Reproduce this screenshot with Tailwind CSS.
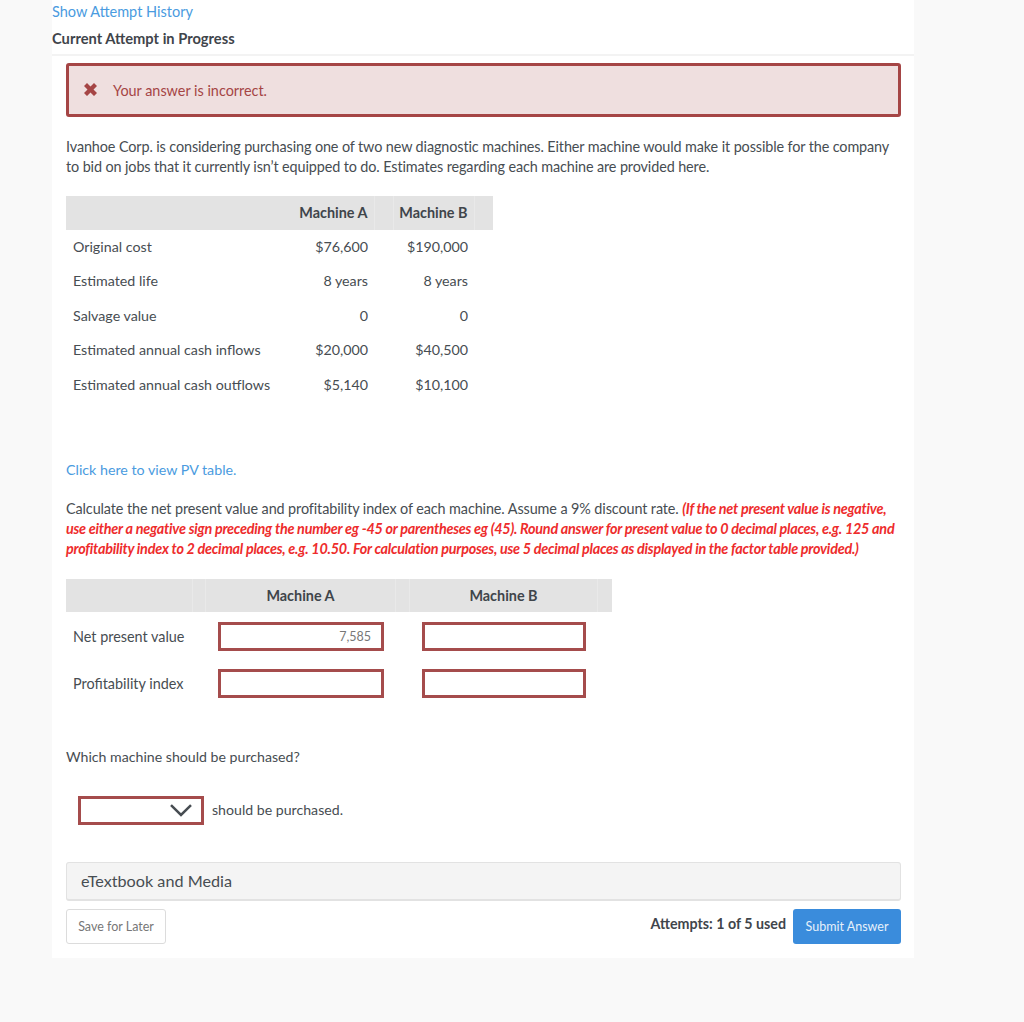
<!doctype html>
<html>
  <head>
    <meta charset="utf-8" />
    <script src="https://cdn.jsdelivr.net/npm/@tailwindcss/browser@4"></script>
  </head>
  <body class="bg-[#f9f9f9] font-['Lato',sans-serif] text-[14.25px] text-[#474d52]">
    <div class="h-[1022px] overflow-hidden">
      <div class="ml-[52px] w-[862px] h-[958px] bg-white">
        <!-- Header -->
        <div class="h-[56px] border-b-2 border-[#f3f3f3] pt-[3px]">
          <a class="block text-[14.5px] text-[#4a9be0] leading-[17px]">Show Attempt History</a>
          <h2 class="mt-[10px] text-[14.7px] font-bold leading-[17px] text-[#3f454b]">Current Attempt in Progress</h2>
        </div>

        <div class="pl-[14px] pr-[13px] pt-[7px]">
          <!-- Incorrect banner -->
          <div class="h-[54px] flex items-center border-[3px] border-[#a54545] rounded-[3px] bg-[#efdfdf] pl-[15px] text-[14.4px] text-[#a54545]">
            <svg class="w-[13px] h-[13px] mb-[2px]" viewBox="0 0 13 13" fill="currentColor">
              <path d="M0 3 3 0 6.5 3.5 10 0 13 3 9.5 6.5 13 10 10 13 6.5 9.5 3 13 0 10 3.5 6.5Z" />
            </svg>
            <span class="ml-[16px] mt-[1px]">Your answer is incorrect.</span>
          </div>

          <p class="mt-[20px] text-[14.4px] leading-[19.5px] tracking-[-0.11px]">
            Ivanhoe Corp. is considering purchasing one of two new diagnostic machines. Either machine would make it possible for the company<br />
            to bid on jobs that it currently isn’t equipped to do. Estimates regarding each machine are provided here.
          </p>

          <!-- Machine estimates -->
          <table class="mt-[19.5px] w-[427px] table-fixed border-collapse">
            <colgroup>
              <col class="w-[308px]" />
              <col class="w-[19px]" />
              <col class="w-[81px]" />
              <col class="w-[19px]" />
            </colgroup>
            <thead>
              <tr class="h-[34px] bg-[#e3e3e3] text-[14.4px] text-[#3f454b]">
                <th class="text-right pr-[6px] font-bold border-r border-[#e9e9e9]">Machine A</th>
                <th class="border-r border-[#e9e9e9]"></th>
                <th class="text-right pr-[6px] font-bold border-r border-[#e9e9e9]">Machine B</th>
                <th></th>
              </tr>
            </thead>
            <tbody>
              <tr class="h-[34.4px]">
                <td class="relative pl-[7px]">Original cost<span class="absolute right-[6px]">$76,600</span></td>
                <td></td>
                <td class="text-right pr-[6px]">$190,000</td>
                <td></td>
              </tr>
              <tr class="h-[34.4px]">
                <td class="relative pl-[7px]">Estimated life<span class="absolute right-[6px]">8 years</span></td>
                <td></td>
                <td class="text-right pr-[6px]">8 years</td>
                <td></td>
              </tr>
              <tr class="h-[34.4px]">
                <td class="relative pl-[7px]">Salvage value<span class="absolute right-[6px]">0</span></td>
                <td></td>
                <td class="text-right pr-[6px]">0</td>
                <td></td>
              </tr>
              <tr class="h-[34.4px]">
                <td class="relative pl-[7px]">Estimated annual cash inflows<span class="absolute right-[6px]">$20,000</span></td>
                <td></td>
                <td class="text-right pr-[6px]">$40,500</td>
                <td></td>
              </tr>
              <tr class="h-[34.4px]">
                <td class="relative pl-[7px]">Estimated annual cash outflows<span class="absolute right-[6px]">$5,140</span></td>
                <td></td>
                <td class="text-right pr-[6px]">$10,100</td>
                <td></td>
              </tr>
            </tbody>
          </table>

          <a class="block mt-[60px] text-[#4a9be0] leading-[18px]">Click here to view PV table.</a>

          <p class="mt-[20px] text-[14.4px] leading-[20px] tracking-[-0.1px]">
            Calculate the net present value and profitability index of each machine. Assume a 9% discount rate.
            <b class="italic text-[#ee2c2c] tracking-[-0.25px]">(If the net present value is negative,<br />
            use either a negative sign preceding the number eg -45 or parentheses eg (45). Round answer for present value to 0 decimal places, e.g. 125 and<br />
            profitability index to 2 decimal places, e.g. 10.50. For calculation purposes, use 5 decimal places as displayed in the factor table provided.)</b>
          </p>

          <!-- Answer table -->
          <div class="mt-[20px] w-[546px]">
            <div class="h-[33px] flex items-center bg-[#e3e3e3] text-[14.4px] font-bold text-[#3f454b]">
              <div class="w-[127px] h-full border-r border-[#e9e9e9]"></div>
              <div class="w-[13px] h-full border-r border-[#e9e9e9]"></div>
              <div class="w-[190px] h-full flex items-center justify-center border-r border-[#e9e9e9]">Machine A</div>
              <div class="w-[14px] h-full border-r border-[#e9e9e9]"></div>
              <div class="w-[188px] h-full flex items-center justify-center border-r border-[#e9e9e9]">Machine B</div>
            </div>
            <div class="mt-[10px] flex items-center h-[29px]">
              <span class="w-[152px] pl-[7px] text-[14.4px]">Net present value</span>
              <div class="w-[166px] h-[29px] flex items-center justify-end border-[3px] border-[#a54c4c] pr-[10px] text-[12.5px] text-[#777]">7,585</div>
              <div class="ml-[38px] w-[164px] h-[29px] border-[3px] border-[#a54c4c]"></div>
            </div>
            <div class="mt-[18px] flex items-center h-[29px]">
              <span class="w-[152px] pl-[7px] text-[14.4px]">Profitability index</span>
              <div class="w-[166px] h-[29px] border-[3px] border-[#a54c4c]"></div>
              <div class="ml-[38px] w-[164px] h-[29px] border-[3px] border-[#a54c4c]"></div>
            </div>
          </div>

          <p class="mt-[50px] leading-[18px] text-[14.15px]">Which machine should be purchased?</p>

          <div class="mt-[30px] ml-[12px] flex items-center h-[29px]">
            <div class="w-[126px] h-[29px] flex items-center justify-end border-[3px] border-[#a54c4c] pr-[9px]">
              <svg class="w-[22px] h-[13px]" viewBox="0 0 22 13" fill="none" stroke="#474d52" stroke-width="2.5">
                <path d="M1 1.2 11 11 21 1.2" />
              </svg>
            </div>
            <span class="ml-[8px] mb-[3px] text-[14.15px]">should be purchased.</span>
          </div>

          <div class="mt-[37px] h-[39px] flex items-center rounded-[3px] border border-[#e2e2e2] border-b-2 bg-[#f4f4f4] pl-[14px] text-[16.2px]">eTextbook and Media</div>

          <!-- Footer actions -->
          <div class="mt-[8px] flex items-start">
            <button class="w-[100px] h-[35px] rounded-[3px] border border-[#dcdcdc] text-[12.5px] text-[#777]">Save for Later</button>
            <span class="ml-auto mt-[4px] font-bold text-[#3f454b]">Attempts: 1 of 5 used</span>
            <button class="ml-[7px] w-[108px] h-[35px] rounded-[3px] bg-[#3a8cdc] text-[12.5px] text-[#e6f0fa]">Submit Answer</button>
          </div>
        </div>
      </div>
    </div>
  </body>
</html>
